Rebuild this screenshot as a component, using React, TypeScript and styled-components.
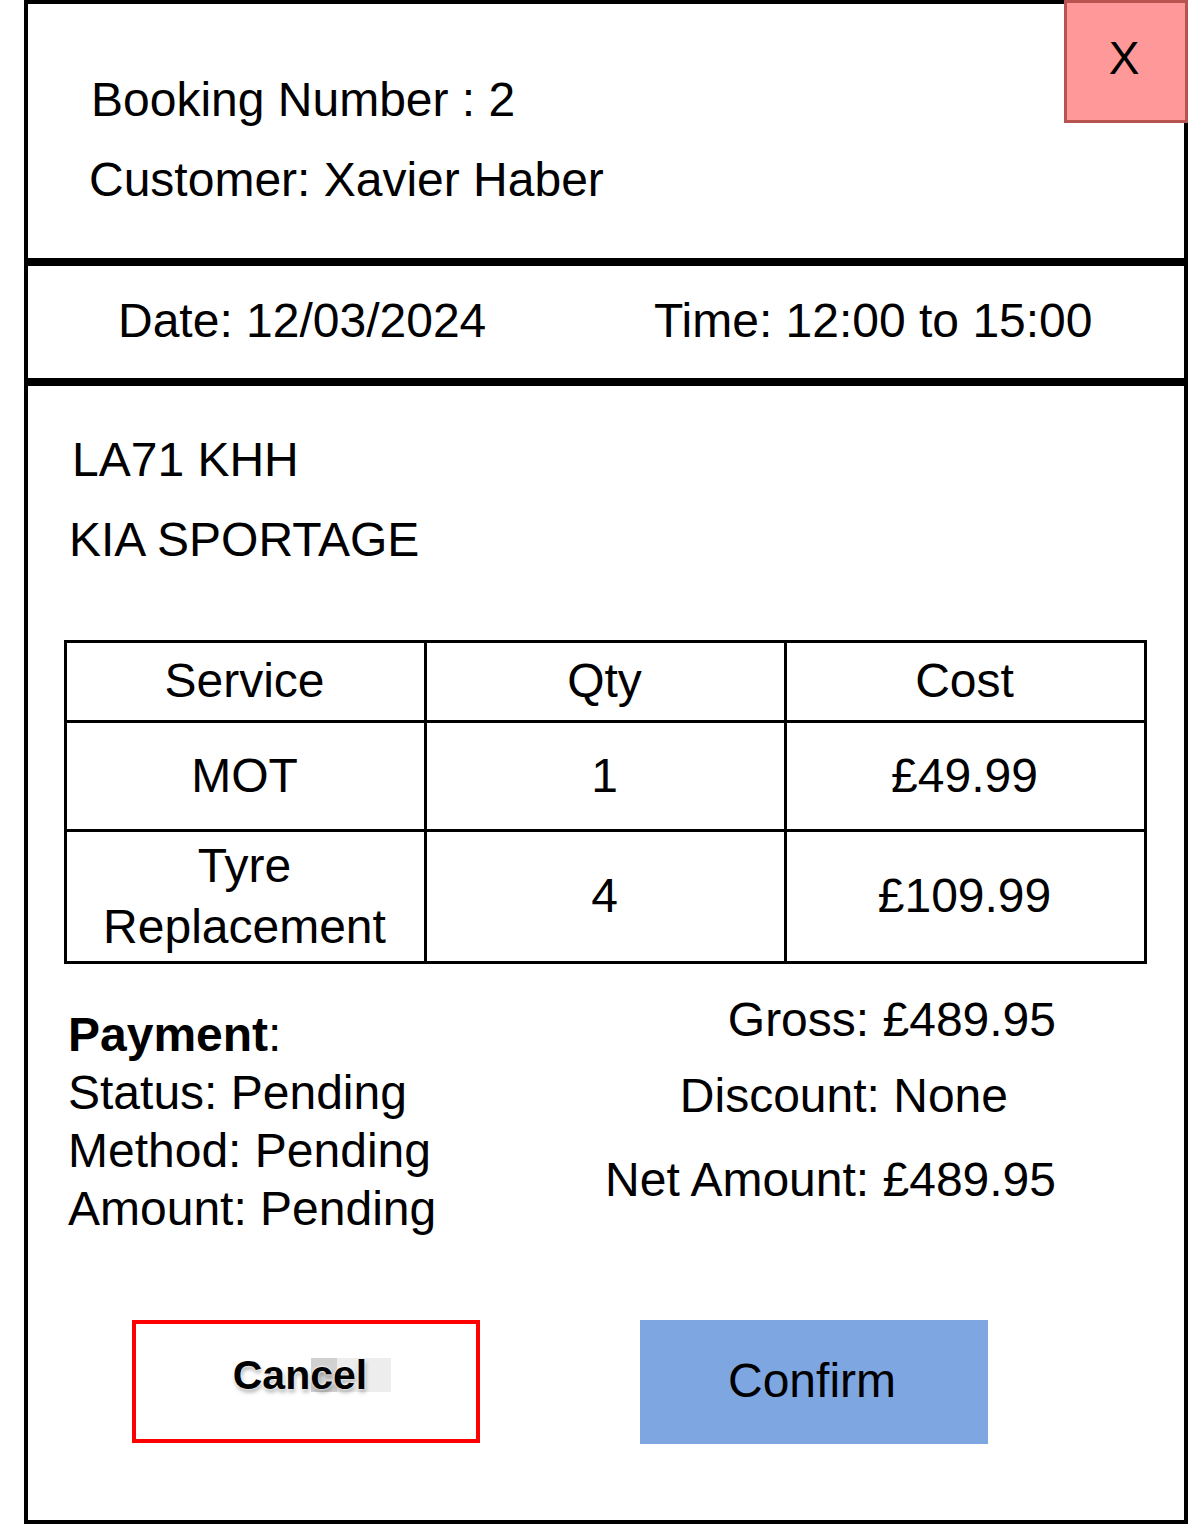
import React from "react";
import styled, { createGlobalStyle } from "styled-components";

const Global = createGlobalStyle`
  html, body { margin: 0; padding: 0; background: #ffffff; }
  body { font-family: "Liberation Sans", Arial, Helvetica, sans-serif; color: #000; }
  * { box-sizing: border-box; }
`;

const Frame = styled.div`
  position: relative;
  margin-left: 24px;
  width: 1164px;
  height: 1524px;
  border: 4px solid #000;
  display: flex;
  flex-direction: column;
  font-size: 48px;
`;

const CloseButton = styled.button`
  position: absolute;
  top: -4px;
  right: -4px;
  width: 124px;
  height: 123px;
  background: #ff9999;
  border: 3px solid #b85450;
  font-family: "Liberation Sans", Arial, sans-serif;
  font-size: 46px;
  color: #000;
  padding: 0 4px 8px 0;
  display: flex;
  align-items: center;
  justify-content: center;
  cursor: pointer;
`;

const Header = styled.div`
  height: 254px;
  padding: 56px 0 0 63px;
  display: flex;
  flex-direction: column;
`;

const Line = styled.div<{ $lh?: number; $indent?: number }>`
  line-height: ${(p) => p.$lh ?? 80}px;
  margin-left: ${(p) => p.$indent ?? 0}px;
  white-space: nowrap;
`;

const Divider = styled.div`
  height: 8px;
  background: #000;
`;

const DateRow = styled.div`
  height: 112px;
  display: grid;
  grid-template-columns: 536px auto;
  align-items: center;
  padding-left: 90px;
  padding-bottom: 4px;
`;

const Body = styled.div`
  flex: 1;
  padding: 34px 37px 0 36px;
  display: flex;
  flex-direction: column;
`;

const Vehicle = styled.div`
  padding-left: 8px;
  margin-bottom: 60px;
`;

const Table = styled.div`
  display: grid;
  grid-template-columns: repeat(3, 1fr);
  grid-template-rows: 77px 106px 129px;
  gap: 3px;
  background: #000;
  border: 3px solid #000;
  width: 1083px;
`;

const Cell = styled.div`
  background: #fff;
  display: flex;
  align-items: center;
  justify-content: center;
  text-align: center;
  line-height: 61px;
  padding: 0 2px 2px 0;
`;

const Summary = styled.div`
  margin-top: 27px;
  display: flex;
  justify-content: space-between;
`;

const PaymentCol = styled.div`
  padding: 15px 0 0 4px;
  display: flex;
  flex-direction: column;
`;

const Bold = styled.b`
  font-weight: 700;
`;

const TotalsCol = styled.div`
  display: flex;
  flex-direction: column;
  align-items: flex-end;
  padding-right: 91px;
`;

const TotalLine = styled.div<{ $top: number; $right?: number }>`
  line-height: 58px;
  margin-top: ${(p) => p.$top}px;
  margin-right: ${(p) => p.$right ?? 0}px;
  white-space: nowrap;
`;

const Actions = styled.div`
  margin-top: 82px;
  display: flex;
  padding-left: 68px;
  gap: 160px;
`;

const CancelButton = styled.button`
  position: relative;
  width: 348px;
  height: 123px;
  background: #fff;
  border: 4px solid #ff0000;
  font-family: "Liberation Sans", Arial, sans-serif;
  font-weight: 700;
  font-size: 41px;
  color: #000;
  padding: 0 12px 12px 0;
  cursor: pointer;
  text-shadow: 0 0 2px #fff, 0 0 3px #fff, 1px 3px 4px rgba(0, 0, 0, 0.35);
`;

const Smudge = styled.span`
  position: absolute;
  left: 175px;
  top: 34px;
  width: 80px;
  height: 34px;
  background: linear-gradient(90deg, #bdbdbd 0 32%, #e6e6e6 32% 100%);
  opacity: 0.7;
  z-index: 0;
`;

const CancelLabel = styled.span`
  position: relative;
  z-index: 1;
`;

const ConfirmButton = styled.button`
  width: 348px;
  height: 124px;
  background: #7ea6e0;
  border: none;
  font-family: "Liberation Sans", Arial, sans-serif;
  font-size: 48px;
  color: #000;
  padding: 0 4px 4px 0;
  cursor: pointer;
`;

export default function App() {
  return (
    <>
      <Global />
      <Frame>
        <CloseButton>X</CloseButton>
        <Header>
          <Line $indent={0}>Booking Number : 2</Line>
          <Line $indent={-2}>Customer: Xavier Haber</Line>
        </Header>
        <Divider />
        <DateRow>
          <span>Date: 12/03/2024</span>
          <span>Time: 12:00 to 15:00</span>
        </DateRow>
        <Divider />
        <Body>
          <Vehicle>
            <Line $indent={0}>LA71 KHH</Line>
            <Line $indent={-3}>KIA SPORTAGE</Line>
          </Vehicle>
          <Table>
            <Cell>Service</Cell>
            <Cell>Qty</Cell>
            <Cell>Cost</Cell>
            <Cell>MOT</Cell>
            <Cell>1</Cell>
            <Cell>£49.99</Cell>
            <Cell>
              Tyre
              <br />
              Replacement
            </Cell>
            <Cell>4</Cell>
            <Cell>£109.99</Cell>
          </Table>
          <Summary>
            <PaymentCol>
              <Line $lh={58}>
                <Bold>Payment</Bold>:
              </Line>
              <Line $lh={58}>Status: Pending</Line>
              <Line $lh={58}>Method: Pending</Line>
              <Line $lh={58}>Amount: Pending</Line>
            </PaymentCol>
            <TotalsCol>
              <TotalLine $top={0}>Gross: £489.95</TotalLine>
              <TotalLine $top={18} $right={48}>
                Discount: None
              </TotalLine>
              <TotalLine $top={26}>Net Amount: £489.95</TotalLine>
            </TotalsCol>
          </Summary>
          <Actions>
            <CancelButton>
              <Smudge />
              <CancelLabel>Cancel</CancelLabel>
            </CancelButton>
            <ConfirmButton>Confirm</ConfirmButton>
          </Actions>
        </Body>
      </Frame>
    </>
  );
}
